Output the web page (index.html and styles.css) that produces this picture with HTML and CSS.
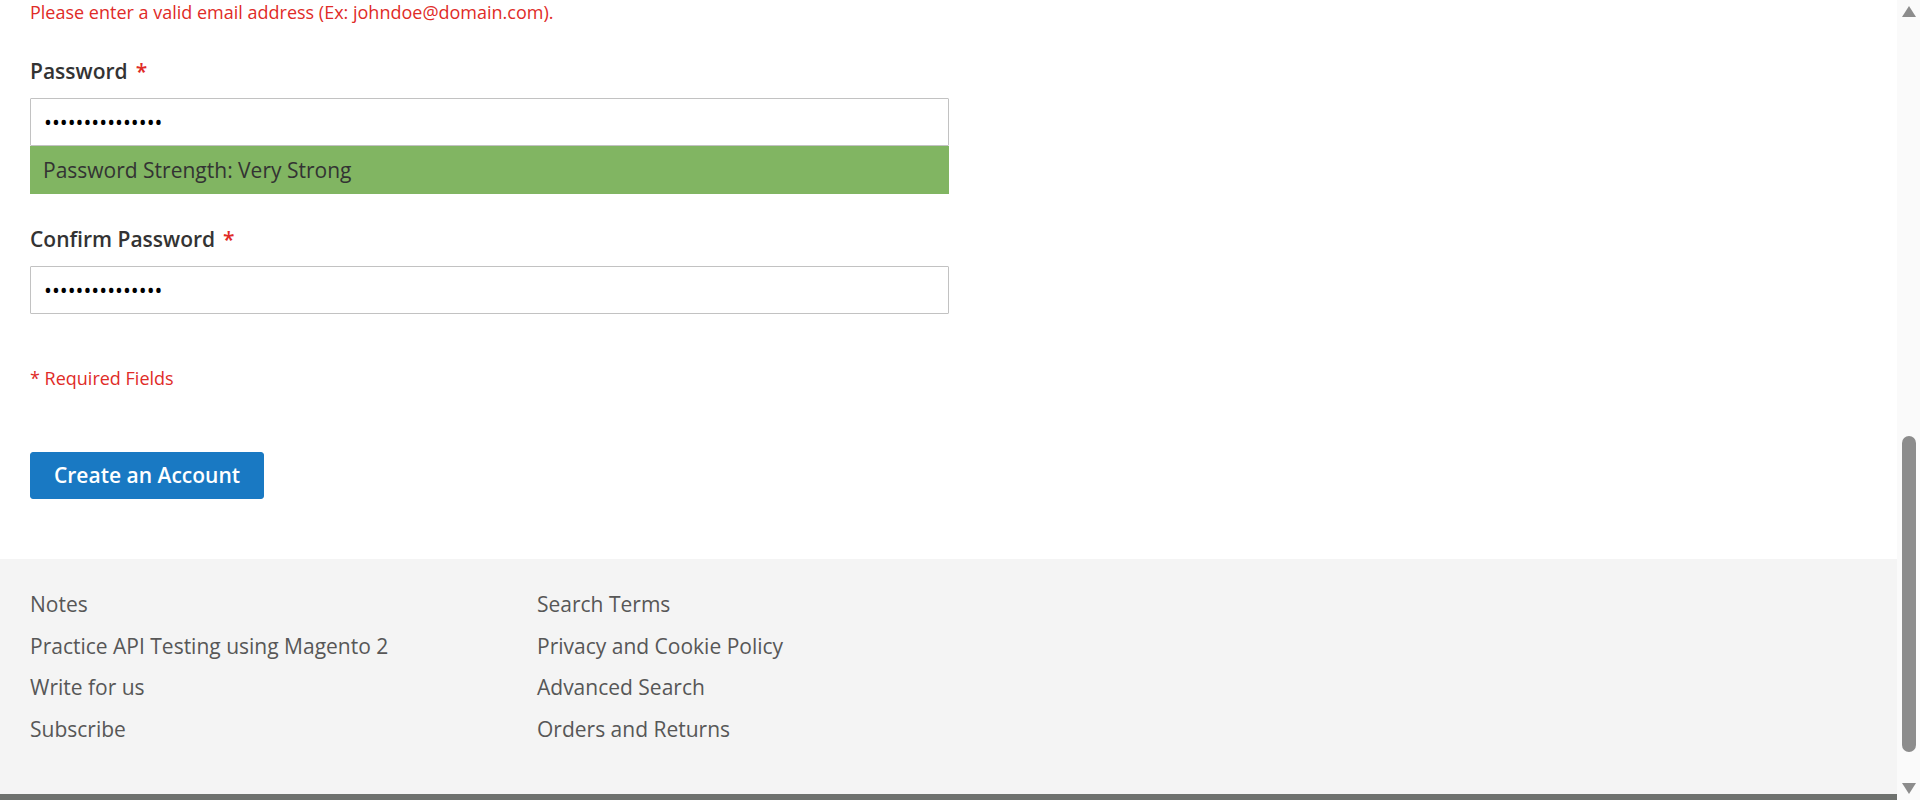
FILE: index.html
```html
<!DOCTYPE html>
<html lang="en">
<head>
<meta charset="utf-8">
<title>Create New Customer Account</title>
<link rel="stylesheet" href="styles.css">
</head>
<body>
<div class="viewport">
  <div class="page">
    <main class="content">
      <div class="field-error">Please enter a valid email address (Ex: johndoe@domain.com).</div>

      <div class="field field-password">
        <label class="label" for="password">Password<span class="req">*</span></label>
        <input class="input-text" id="password" type="password" value="Test@1234567890">
        <div class="strength-meter">Password Strength: Very Strong</div>
      </div>

      <div class="field field-confirm">
        <label class="label" for="password-confirmation">Confirm Password<span class="req">*</span></label>
        <input class="input-text" id="password-confirmation" type="password" value="Test@1234567890">
      </div>

      <div class="required-note">* Required Fields</div>

      <div class="actions">
        <button class="btn-primary" type="button">Create an Account</button>
      </div>
    </main>

    <footer class="page-footer">
      <ul class="footer-links">
        <li>Notes</li>
        <li>Practice API Testing using Magento 2</li>
        <li>Write for us</li>
        <li>Subscribe</li>
      </ul>
      <ul class="footer-links">
        <li>Search Terms</li>
        <li>Privacy and Cookie Policy</li>
        <li>Advanced Search</li>
        <li>Orders and Returns</li>
      </ul>
    </footer>
    <div class="copyright"></div>
  </div>

  <div class="scrollbar" aria-hidden="true">
    <svg class="sb-arrow sb-up" width="14" height="11" viewBox="0 0 14 11"><polygon points="7,0 14,11 0,11" fill="#8c8c8c"/></svg>
    <div class="sb-thumb"></div>
    <svg class="sb-arrow sb-down" width="14" height="11" viewBox="0 0 14 11"><polygon points="0,0 14,0 7,11" fill="#8c8c8c"/></svg>
  </div>
</div>
</body>
</html>
```
FILE: styles.css
```css
* { box-sizing: border-box; }

html, body {
  margin: 0;
  padding: 0;
  height: 800px;
  overflow: hidden;
  background: #ffffff;
  font-family: "Open Sans", "Liberation Sans", sans-serif;
  color: #333333;
}

.viewport {
  display: flex;
  height: 800px;
}

.page {
  flex: 1;
  display: flex;
  flex-direction: column;
  min-width: 0;
}

.content {
  padding: 0 30px;
  display: flex;
  flex-direction: column;
  align-items: flex-start;
}

.field-error {
  font-size: 18px;
  line-height: 24px;
  color: #e02b27;
}

.field {
  display: flex;
  flex-direction: column;
  width: 919px;
}

.field-password { margin-top: 33px; }
.field-confirm { margin-top: 31px; }

.label {
  font-size: 21px;
  line-height: 28px;
  font-weight: 600;
  color: #333333;
  margin-bottom: 13px;
}

.req {
  color: #e02b27;
  margin-left: 8px;
  font-weight: 600;
}

.input-text {
  display: block;
  width: 100%;
  height: 48px;
  margin: 0;
  padding: 0 13px;
  border: 1px solid #c2c2c2;
  border-radius: 1px;
  background: #ffffff;
  font-family: "Open Sans", "Liberation Sans", sans-serif;
  font-size: 21px;
  color: #000000;
  outline: none;
}

.strength-meter {
  height: 48px;
  line-height: 48px;
  padding: 0 13px;
  background: #81b562;
  font-size: 21px;
  color: #333333;
}

.required-note {
  margin-top: 52px;
  font-size: 18px;
  line-height: 24px;
  color: #e02b27;
}

.actions { margin-top: 62px; }

.btn-primary {
  display: block;
  height: 47px;
  padding: 0 23px;
  border: 1px solid #1979c3;
  border-radius: 3px;
  background: #1979c3;
  color: #ffffff;
  font-family: "Open Sans", "Liberation Sans", sans-serif;
  font-size: 21px;
  font-weight: 600;
  line-height: 45px;
  cursor: pointer;
}

.page-footer {
  margin-top: 60px;
  height: 235px;
  padding: 31px 30px 0;
  background: #f4f4f4;
  display: grid;
  grid-template-columns: 507px 507px;
  align-content: start;
}

.footer-links {
  list-style: none;
  margin: 0;
  padding: 0;
}

.footer-links li {
  font-size: 21px;
  line-height: 28px;
  color: #575757;
  margin-bottom: 13.67px;
}

.copyright {
  height: 6px;
  background: #6e716e;
}

.scrollbar {
  width: 23px;
  flex: 0 0 23px;
  background: #fafafa;
  display: flex;
  flex-direction: column;
  align-items: center;
  padding-left: 5px;
  padding-right: 4px;
}

.sb-arrow { display: block; flex: 0 0 auto; }
.sb-up { margin-top: 6px; }

.sb-thumb {
  width: 14px;
  height: 316px;
  margin-top: 419px;
  border-radius: 7px;
  background: #8c8c8c;
}

.sb-down { margin-top: 31px; }
```
